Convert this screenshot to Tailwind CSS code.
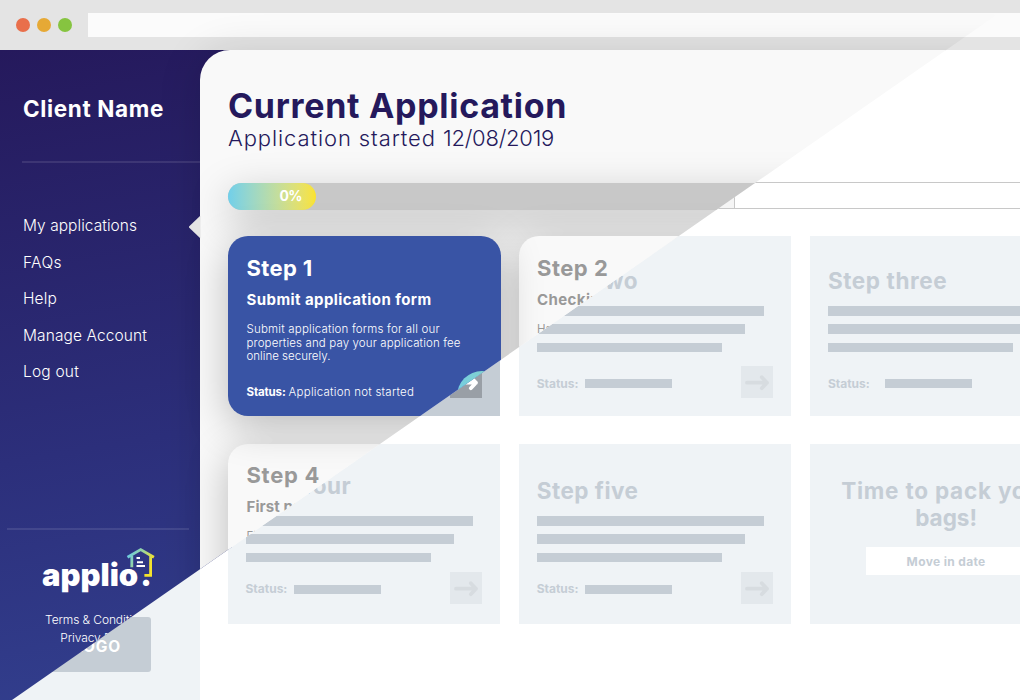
<!DOCTYPE html>
<html lang="en">
<head>
<meta charset="utf-8">
<title>Current Application</title>
<script src="https://cdn.jsdelivr.net/npm/@tailwindcss/browser@4"></script>
</head>
<body class="w-[1020px] h-[700px] overflow-hidden bg-white font-['Inter',sans-serif]">
<svg class="hidden"><symbol id="arrow" viewBox="0 0 32 32"><path d="M6 16.7H26M20.8 11.2L26 16.7L20.8 22.2" fill="none" stroke="currentColor" stroke-width="3.8" stroke-linecap="round" stroke-linejoin="round"/></symbol></svg>
<div class="grid w-[1020px] h-[700px] overflow-hidden">

  <!-- Wireframe layer -->
  <div class="col-start-1 row-start-1 w-[1020px] h-[700px] flex flex-col overflow-hidden">
    <header class="h-[50px] shrink-0 bg-[#e4e4e4] flex items-center pl-4">
      <div class="flex gap-[7px]">
        <i class="size-3.5 rounded-full bg-[#e96f4b]"></i><i class="size-3.5 rounded-full bg-[#e6a935]"></i><i class="size-3.5 rounded-full bg-[#86c440]"></i>
      </div>
      <div class="ml-4 h-6 grow bg-[#fbfbfb]"></div>
    </header>
    <div class="flex grow">
      <aside class="w-[200px] shrink-0 bg-[#eff3f6] pt-[567px] pl-11">
        <div class="w-[107px] h-[55px] rounded-[3px] bg-[#c5cdd5] flex items-center justify-center pt-[4px] text-white font-bold text-[15.5px] tracking-[0.8px]">LOGO</div>
      </aside>
      <main class="grow bg-white pl-[27.5px] pt-[132px] w-[820px] overflow-hidden">
        <div class="h-[27px] w-[900px] border border-[#c8c8c8] flex"><div class="w-[506px] border-r border-[#c8c8c8] bg-[#f5f5f5]"></div></div>
        <div class="mt-[27px] grid grid-cols-[272.5px_272.5px_272.5px] gap-x-[18.7px] gap-y-7 w-[855px] text-[#c5cdd5] font-bold">
          <section class="h-[180px] bg-[#c5cdd5] pl-[222.5px] pt-[130px]">
            <div class="size-8 bg-[#999fa6] text-white"><svg class="size-8"><use href="#arrow"/></svg></div>
          </section>
          <section class="h-[180px] bg-[#eff3f6] px-[18px]">
            <h3 class="h-[70px] pt-[32px] text-[22.5px] leading-[26px] whitespace-nowrap tracking-[0.55px]">Step two</h3>
            <div class="flex flex-col gap-[8.8px]"><i class="h-[9.5px] w-[227px] bg-[#c5cdd5]"></i><i class="h-[9.5px] w-[208px] bg-[#c5cdd5]"></i><i class="h-[9.5px] w-[185px] bg-[#c5cdd5]"></i></div>
            <div class="mt-[13.9px] flex h-8 items-center text-xs"><span class="w-12 pt-[4px]">Status:</span><i class="h-[9px] w-[87px] mt-[3px] bg-[#c5cdd5]"></i><span class="ml-auto size-8 bg-[#e3e8ec] text-[#d7dce0]"><svg class="size-8"><use href="#arrow"/></svg></span></div>
          </section>
          <section class="h-[180px] bg-[#eff3f6] px-[18px]">
            <h3 class="h-[70px] pt-[32px] text-[22.5px] leading-[26px] whitespace-nowrap tracking-[0.6px]">Step three</h3>
            <div class="flex flex-col gap-[8.8px]"><i class="h-[9.5px] w-[227px] bg-[#c5cdd5]"></i><i class="h-[9.5px] w-[208px] bg-[#c5cdd5]"></i><i class="h-[9.5px] w-[185px] bg-[#c5cdd5]"></i></div>
            <div class="mt-[13.9px] flex h-8 items-center text-xs"><span class="w-[57px] pt-[4px]">Status:</span><i class="h-[9px] w-[87px] mt-[3px] bg-[#c5cdd5]"></i></div>
          </section>
          <section class="h-[180px] bg-[#eff3f6] px-[18px]">
            <h3 class="h-[72px] pt-[29px] text-[22.5px] leading-[26px] whitespace-nowrap tracking-[0.52px]">Step four</h3>
            <div class="flex flex-col gap-[8.8px]"><i class="h-[9.5px] w-[227px] bg-[#c5cdd5]"></i><i class="h-[9.5px] w-[208px] bg-[#c5cdd5]"></i><i class="h-[9.5px] w-[185px] bg-[#c5cdd5]"></i></div>
            <div class="mt-[9.9px] flex h-8 items-center text-xs"><span class="w-12 pt-[2px]">Status:</span><i class="h-[9px] w-[87px] mt-[3px] bg-[#c5cdd5]"></i><span class="ml-auto size-8 bg-[#e3e8ec] text-[#d7dce0]"><svg class="size-8"><use href="#arrow"/></svg></span></div>
          </section>
          <section class="h-[180px] bg-[#eff3f6] px-[18px]">
            <h3 class="h-[72px] pt-[34px] text-[22.5px] leading-[26px] whitespace-nowrap tracking-[0.48px]">Step five</h3>
            <div class="flex flex-col gap-[8.8px]"><i class="h-[9.5px] w-[227px] bg-[#c5cdd5]"></i><i class="h-[9.5px] w-[208px] bg-[#c5cdd5]"></i><i class="h-[9.5px] w-[185px] bg-[#c5cdd5]"></i></div>
            <div class="mt-[9.9px] flex h-8 items-center text-xs"><span class="w-12 pt-[2px]">Status:</span><i class="h-[9px] w-[87px] mt-[3px] bg-[#c5cdd5]"></i><span class="ml-auto size-8 bg-[#e3e8ec] text-[#d7dce0]"><svg class="size-8"><use href="#arrow"/></svg></span></div>
          </section>
          <section class="h-[180px] bg-[#eff3f6] pt-[34px] flex flex-col items-center text-center">
            <h3 class="text-[22.5px] leading-[26.5px] whitespace-nowrap"><span class="tracking-[0.78px]">Time to pack your</span><br><span>bags!</span></h3>
            <div class="mt-[16px] h-[27.5px] w-40 bg-white text-xs leading-[30px] tracking-[0.35px]">Move in date</div>
          </section>
        </div>
      </main>
    </div>
  </div>

  <!-- Finished design layer, cut along the diagonal -->
  <div class="col-start-1 row-start-1 w-[1020px] h-[700px] overflow-hidden pt-[50px] flex [clip-path:polygon(0_0,1018px_0,12px_700px,0_700px)]">
    <aside class="w-[232px] -mr-8 shrink-0 bg-[linear-gradient(170deg,#25195c,#2c2f7b_60%,#323f8e)] text-white h-[650px]">
      <h2 class="pl-[23px] pt-[45px] text-[22.5px] leading-7 font-bold whitespace-nowrap tracking-[0.64px]">Client Name</h2>
      <div class="ml-[22px] mt-[38px] h-[2px] bg-white/10"></div>
      <nav class="pl-[23px] mt-[45.4px] flex flex-col text-[15.5px] leading-[36.4px] font-light whitespace-nowrap">
        <a class="tracking-[0.05px]">My applications</a><a class="tracking-[0.38px]">FAQs</a><a class="tracking-[0.15px]">Help</a><a class="tracking-[0.1px]">Manage Account</a><a class="tracking-[0.2px]">Log out</a>
      </nav>
      <div class="ml-[7px] w-[182px] mt-[138px] h-[2px] bg-white/10"></div>
      <div class="flex pl-[42px] mt-[16px] h-[50px]">
        <div class="w-[110px] pt-[11px] text-[31px] leading-[36px] font-black whitespace-nowrap">applio<span class="ml-[2px]">.</span></div>
        <svg class="-ml-[26px] w-[30px] h-[32px]" viewBox="126 545 30 32" fill="none"><defs><linearGradient id="g" gradientUnits="userSpaceOnUse" x1="128" y1="552" x2="154" y2="568"><stop stop-color="#67cbea"/><stop offset=".45" stop-color="#a3d68e"/><stop offset=".8" stop-color="#f5e32d"/></linearGradient></defs><path d="M127.5 556.3L140.7 548.6L153.9 556.3M131.8 555V566.3M150.6 555V574.4H144.4" stroke="url(#g)" stroke-width="2.8"/><path d="M136.5 557H140M137 561.2H143M136.5 565H145" stroke="#fff" stroke-width="1.9"/></svg>
      </div>
      <div class="w-[197px] mt-[15px] text-center text-[12px] leading-[18px] font-light whitespace-nowrap tracking-[-0.1px]">Terms &amp; Conditions<br>Privacy Policy</div>
    </aside>
    <main class="relative w-[840px] shrink-0 h-[690px] rounded-tl-[30px] bg-[#f9f9f9] shadow-[0_4px_44px_rgba(0,0,0,.14)] pl-7 pt-[35px] text-[#25195c]">
      <div class="absolute -left-[11.5px] top-[165.5px] w-3 h-[23px] bg-[#e4e4e4] [clip-path:polygon(0_50%,100%_0,100%_100%)]"></div>
      <h1 class="text-[34px] leading-[41px] h-[39px] font-bold whitespace-nowrap tracking-[0.7px]">Current Application</h1>
      <p class="text-[22px] leading-[29px] h-7 whitespace-nowrap font-light"><span class="tracking-[0.9px]">Application started </span><span class="tracking-[-0.24px]">12/08/2019</span></p>
      <div class="mt-[30.5px] h-[27.5px] w-[900px] rounded-full bg-[#c8c8c8] shadow-[0_12px_40px_rgba(0,0,0,.25)]">
        <div class="h-full w-[88px] rounded-full bg-linear-to-r from-[#70cfea] to-[#fbe32b] text-white font-bold text-[14px] leading-[26px] text-right pr-[14px] tracking-[-0.6px]">0%</div>
      </div>
      <div class="mt-[26px] grid grid-cols-[273px_273px] gap-x-[18px] gap-y-[27.5px] whitespace-nowrap">
        <section class="relative h-[180px] rounded-[20px] bg-[#3954a5] text-white px-[18.5px] pt-[19px] shadow-[0_10px_40px_rgba(0,0,0,.25)]">
          <h3 class="text-[22px] leading-[26px] font-bold tracking-[0.35px]">Step 1</h3>
          <h4 class="mt-[8.5px] text-[15px] leading-5 font-bold tracking-[0.43px]">Submit application form</h4>
          <p class="mt-[13.3px] text-[11.5px] leading-[13.7px] font-light"><span class="tracking-[0.2px]">Submit application forms for all our</span><br><span class="tracking-[0.13px]">properties and pay your application fee</span><br>online securely.</p>
          <p class="mt-[19.7px] text-[11.5px] leading-4"><b class="tracking-[-0.15px]">Status:</b><span class="ml-[3px] font-light tracking-[0.24px]">Application not started</span></p>
          <div class="absolute left-[228.5px] top-[134.5px] size-[50px] rounded-full bg-linear-to-r from-[#74cde0] to-[#8fd6c0]"></div>
        </section>
        <section class="h-[180px] rounded-[20px] bg-[#f9f9f9] text-[#999] px-[18px] pt-[19px] shadow-[0_10px_40px_rgba(0,0,0,.25)]">
          <h3 class="text-[22px] leading-[26px] font-bold tracking-[0.5px]">Step 2</h3>
          <h4 class="mt-[8.5px] text-[15px] leading-5 font-bold tracking-[0.4px]">Checking</h4>
          <p class="mt-[13.3px] text-[11.5px] leading-[13.7px]">Have</p>
        </section>
        <section class="h-[180px] rounded-[20px] bg-[#f9f9f9] text-[#999] px-[18.5px] pt-[18px] shadow-[0_10px_40px_rgba(0,0,0,.25)]">
          <h3 class="text-[22px] leading-[26px] font-bold tracking-[0.7px]">Step 4</h3>
          <h4 class="mt-[9.5px] text-[15px] leading-5 font-bold tracking-[0.08px]">First payment</h4>
          <p class="mt-[12.5px] text-[11.5px] leading-[13.7px]">First</p>
        </section>
      </div>
    </main>
  </div>
</div>
</body>
</html>
